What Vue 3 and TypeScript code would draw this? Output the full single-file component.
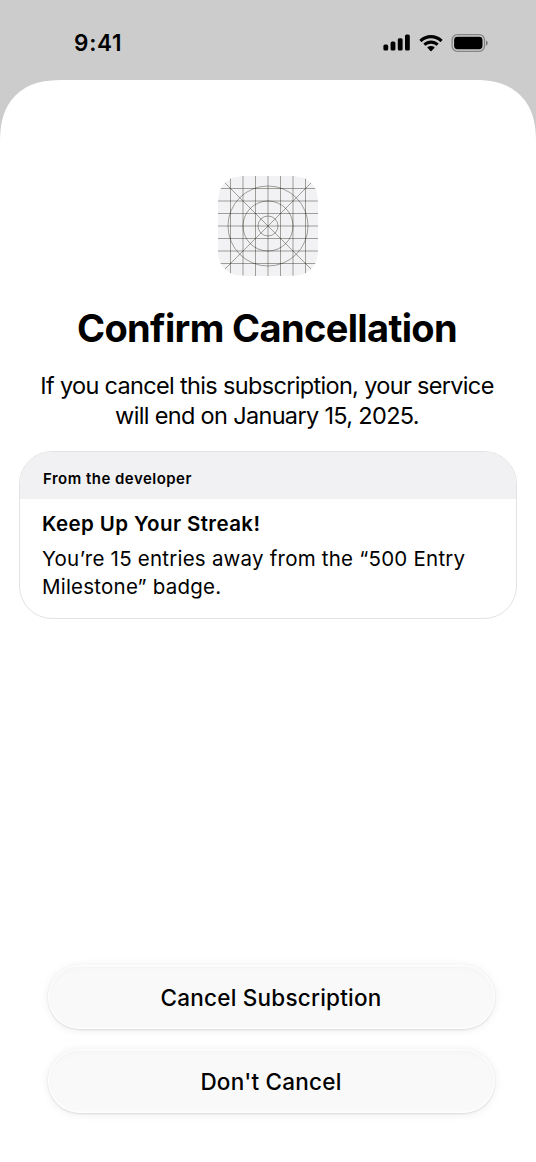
<script setup lang="ts">
interface Action {
  id: string
  label: string
}

const gridLines: number[] = [12.5, 25, 37.5, 50, 62.5, 75, 87.5]
const rings: number[] = [10, 25, 40]
const actions: Action[] = [
  { id: 'cancel', label: 'Cancel Subscription' },
  { id: 'keep', label: "Don't Cancel" },
]
</script>

<template>
  <div class="screen">
    <header class="status">
      <span class="time">9:41</span>
      <div class="indicators">
        <svg class="signal" width="28" height="18" viewBox="0 0 28 18">
          <rect x="0.4" y="10.6" width="4.8" height="6" rx="1.5" />
          <rect x="7.6" y="7.6" width="4.8" height="9" rx="1.5" />
          <rect x="14.800" y="4.200" width="4.800" height="12.400" rx="1.500" />
          <rect x="22" y="0.600" width="4.800" height="16" rx="1.500" />
        </svg>
        <svg class="wifi" width="24" height="18" viewBox="0 0 24 18">
          <path d="M12 0.9C7.7 0.9 3.7 2.6 0.7 5.4C0.4 5.7 0.4 6 0.7 6.3L2.1 7.7C2.4 8 2.7 8 3 7.7C5.4 5.5 8.5 4.2 12 4.2S18.600 5.5 21 7.700C21.300 8 21.600 8 21.900 7.700L23.300 6.300C23.600 6 23.600 5.700 23.300 5.400C20.300 2.600 16.300 0.900 12 0.900Z" />
          <path d="M12 6.400C9.200 6.400 6.600 7.500 4.700 9.200C4.400 9.500 4.400 9.800 4.700 10.100L6.100 11.500C6.400 11.800 6.700 11.800 7 11.500C8.300 10.400 10.100 9.700 12 9.700S15.700 10.400 17 11.500C17.300 11.800 17.600 11.800 17.900 11.500L19.300 10.100C19.600 9.800 19.600 9.500 19.300 9.200C17.400 7.500 14.800 6.400 12 6.400Z" />
          <path d="M12 11.900C10.700 11.900 9.500 12.300 8.600 13.100C8.300 13.400 8.300 13.700 8.600 14L11.500 16.900C11.800 17.200 12.200 17.200 12.500 16.900L15.400 14C15.700 13.700 15.700 13.400 15.400 13.100C14.500 12.300 13.300 11.900 12 11.900Z" />
        </svg>
        <svg class="battery" width="38" height="18" viewBox="0 0 38 18">
          <rect x="1.1" y="0.7" width="32.4" height="16.6" rx="5.2" fill="none" stroke="#000" stroke-opacity="0.35" stroke-width="1.3" />
          <rect x="3.1" y="2.8" width="28.4" height="12.400" rx="3.4" />
          <path d="M35 6.400V11.700C36.100 11.200 36.800 10.200 36.800 9.050S36.100 6.900 35 6.400Z" fill-opacity="0.4" />
        </svg>
      </div>
    </header>

    <main class="sheet">
      <svg class="app-icon" width="100" height="100" viewBox="0 0 100 100">
        <defs>
          <clipPath id="icon-shape">
            <path d="M30 0H70C81 0 87.500 1 93.100 6.900C99 12.500 100 19 100 30V70C100 81 99 87.500 93.100 93.100C87.500 99 81 100 70 100H30C19 100 12.500 99 6.900 93.100C1 87.500 0 81 0 70V30C0 19 1 12.500 6.900 6.900C12.500 1 19 0 30 0Z" />
          </clipPath>
        </defs>
        <g clip-path="url(#icon-shape)">
          <rect width="100" height="100" fill="#f2f2f5" />
          <g class="guides">
            <template v-for="p in gridLines" :key="p">
              <line :x1="p" y1="0" :x2="p" y2="100" />
              <line x1="0" :y1="p" x2="100" :y2="p" />
            </template>
            <line x1="0" y1="0" x2="100" y2="100" />
            <line x1="100" y1="0" x2="0" y2="100" />
            <circle v-for="r in rings" :key="r" cx="50" cy="50" :r="r" />
          </g>
        </g>
      </svg>

      <h1 class="title">Confirm Cancellation</h1>
      <p class="summary">
        If you cancel this subscription, your service<br />
        will end on January 15, 2025.
      </p>

      <section class="card">
        <div class="card-head">From the developer</div>
        <div class="card-body">
          <h2>Keep Up Your Streak!</h2>
          <p>You’re 15 entries away from the “500 Entry<br />Milestone” badge.</p>
        </div>
      </section>

      <div class="actions">
        <button v-for="a in actions" :key="a.id" :class="['action', a.id]" type="button">
          <span>{{ a.label }}</span>
        </button>
      </div>
    </main>
  </div>
</template>

<style>
body {
  margin: 0;
  background: #fff;
}
</style>

<style scoped>
.screen {
  width: 536px;
  height: 1162px;
  display: flex;
  flex-direction: column;
  background: #ccc;
  color: #000;
  font-family: Inter, "Liberation Sans", sans-serif;
  overflow: hidden;
}
.status {
  height: 80px;
  flex: none;
  box-sizing: border-box;
  padding: 34px 47px 0 74px;
  display: flex;
  justify-content: space-between;
  align-items: flex-start;
}
.time {
  font-size: 22.5px;
  line-height: 18px;
  font-weight: 600;
  letter-spacing: 0.75px;
}
.indicators {
  display: flex;
  align-items: center;
}
.indicators svg {
  display: block;
}
.wifi {
  margin-left: 8px;
}
.battery {
  margin-left: 8px;
}
.sheet {
  flex: 1;
  box-sizing: border-box;
  padding: 96px 19px 49px;
  display: flex;
  flex-direction: column;
  background: #fff;
  clip-path: path("M0 62C0 44 3 28 15.500 15.500C28 3 44 0 62 0H474C492 0 508 3 520.500 15.500C533 28 536 44 536 62V1082H0Z");
}
.app-icon {
  display: block;
  align-self: center;
}
.guides {
  fill: none;
  stroke: #141000;
  stroke-opacity: 0.42;
  stroke-width: 0.9;
}
.title {
  margin: 29px 0 0;
  padding-right: 2px;
  font-size: 38px;
  line-height: 46px;
  font-weight: 700;
  letter-spacing: -0.64px;
  text-align: center;
  white-space: nowrap;
}
.summary {
  margin: 20px 0 0;
  padding-right: 2px;
  font-size: 23.5px;
  line-height: 30px;
  letter-spacing: -0.67px;
  text-align: center;
  white-space: nowrap;
}
.card {
  box-sizing: border-box;
  height: 168px;
  margin-top: 20px;
  border: 1px solid #e3e3e5;
  border-radius: 33px;
  overflow: hidden;
  flex: none;
}
.card-head {
  height: 47px;
  padding: 4px 23px 0;
  box-sizing: border-box;
  background: #f1f1f4;
  font-size: 15px;
  line-height: 46px;
  font-weight: 600;
  letter-spacing: 0.48px;
}
.card-body {
  padding: 11px 22px 0;
  white-space: nowrap;
}
.card-body h2 {
  margin: 0;
  font-size: 20.5px;
  line-height: 28px;
  font-weight: 600;
  letter-spacing: 0.4px;
}
.card-body p {
  margin: 7px 0 0;
  font-size: 20.5px;
  line-height: 28px;
  letter-spacing: 0.22px;
}
.actions {
  margin: auto 22px 0 29px;
  display: flex;
  flex-direction: column;
  gap: 20px;
}
.action {
  height: 64px;
  padding: 2px 1px 0 0;
  border: 0;
  border-radius: 32px;
  background: #f9f9f9;
  box-shadow:
    inset 0 0 1px 1.2px #fff,
    inset 0 3px 6px rgba(0, 0, 0, 0.022),
    0 0 1px rgba(0, 0, 0, 0.07),
    0 1px 2px rgba(0, 0, 0, 0.1),
    0 1px 10px rgba(0, 0, 0, 0.08);
  color: #000;
  font-family: inherit;
  font-size: 22.5px;
  line-height: 28px;
  font-weight: 500;
  letter-spacing: 0.22px;
}
</style>
